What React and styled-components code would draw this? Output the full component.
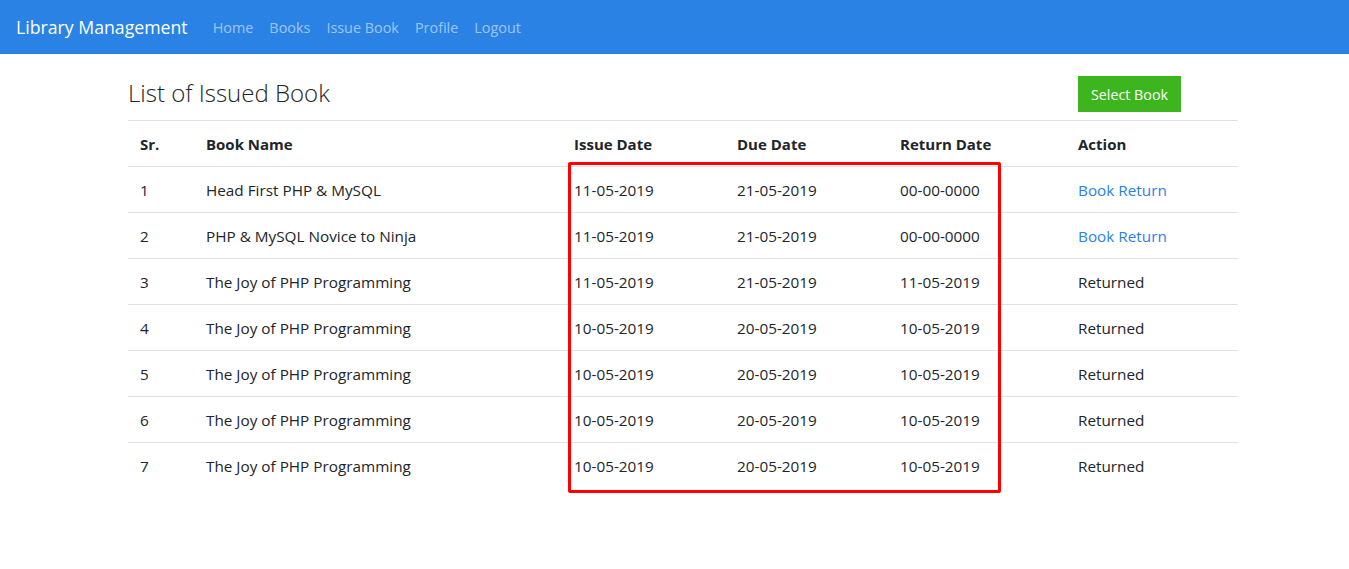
import React from "react";
import styled, { createGlobalStyle } from "styled-components";

const GlobalStyle = createGlobalStyle`
  html, body {
    min-height: 100%;
  }
  body {
    margin: 0;
    font-family: "Segoe UI", "Open Sans", "Liberation Sans", sans-serif;
    font-size: 15.3px;
    color: #212529;
    background: #fff;
  }
`;

const Navbar = styled.nav`
  display: flex;
  align-items: center;
  height: 54px;
  padding: 0 16px;
  background: #2a82e4;
`;

const Brand = styled.a`
  color: #fff;
  font-size: 17.7px;
  margin-right: 17px;
  text-decoration: none;
`;

const NavLink = styled.a`
  color: rgba(255, 255, 255, 0.55);
  font-size: 14.4px;
  padding: 0 8px;
  text-decoration: none;
`;

const Container = styled.main`
  position: relative;
  width: 1110px;
  margin-left: 128px;
  padding: 22px 0 60px;
`;

const Header = styled.div`
  display: flex;
  align-items: center;
  justify-content: space-between;
  height: 36px;
  margin-bottom: 8px;
`;

const Title = styled.h3`
  margin: 0 0 4px;
  font-size: 24px;
  font-weight: 300;
  color: #212529;
`;

const Button = styled.button`
  background: #3db51e;
  color: #fff;
  border: none;
  font-family: inherit;
  font-size: 14.3px;
  height: 36px;
  width: 103px;
  margin-right: 57px;
  padding: 0;
`;

const Table = styled.table`
  width: 1110px;
  table-layout: fixed;
  border-collapse: collapse;
`;

const Th = styled.th`
  box-sizing: border-box;
  text-align: left;
  font-weight: 700;
  font-size: 15px;
  padding: 0 12px;
  height: 46px;
  border-top: 1px solid #dee2e6;
  border-bottom: 1px solid #dee2e6;
  width: ${p => p.$w}px;
`;

const Td = styled.td`
  padding: 0 12px;
  height: 45px;
  border-top: 1px solid #dee2e6;
`;

const ActionLink = styled.a`
  color: #2a82e4;
  text-decoration: none;
`;

const Highlight = styled.div`
  position: absolute;
  box-sizing: border-box;
  left: 440px;
  top: 108px;
  width: 433px;
  height: 331px;
  border: 3px solid #f00;
  border-radius: 2px;
  pointer-events: none;
`;

const rows = [
  ["Head First PHP & MySQL", "11-05-2019", "21-05-2019", "00-00-0000", false],
  ["PHP & MySQL Novice to Ninja", "11-05-2019", "21-05-2019", "00-00-0000", false],
  ["The Joy of PHP Programming", "11-05-2019", "21-05-2019", "11-05-2019", true],
  ["The Joy of PHP Programming", "10-05-2019", "20-05-2019", "10-05-2019", true],
  ["The Joy of PHP Programming", "10-05-2019", "20-05-2019", "10-05-2019", true],
  ["The Joy of PHP Programming", "10-05-2019", "20-05-2019", "10-05-2019", true],
  ["The Joy of PHP Programming", "10-05-2019", "20-05-2019", "10-05-2019", true],
];

export default function App() {
  return (
    <>
      <GlobalStyle />
      <Navbar>
        <Brand href="#">Library Management</Brand>
        <NavLink href="#">Home</NavLink>
        <NavLink href="#">Books</NavLink>
        <NavLink href="#">Issue Book</NavLink>
        <NavLink href="#">Profile</NavLink>
        <NavLink href="#">Logout</NavLink>
      </Navbar>
      <Container>
        <Header>
          <Title>List of Issued Book</Title>
          <Button>Select Book</Button>
        </Header>
        <Table>
          <thead>
            <tr>
              <Th $w={66}>Sr.</Th>
              <Th $w={368}>Book Name</Th>
              <Th $w={163}>Issue Date</Th>
              <Th $w={163}>Due Date</Th>
              <Th $w={178}>Return Date</Th>
              <Th $w={172}>Action</Th>
            </tr>
          </thead>
          <tbody>
            {rows.map((r, i) => (
              <tr key={i}>
                <Td>{i + 1}</Td>
                <Td>{r[0]}</Td>
                <Td>{r[1]}</Td>
                <Td>{r[2]}</Td>
                <Td>{r[3]}</Td>
                <Td>{r[4] ? "Returned" : <ActionLink href="#">Book Return</ActionLink>}</Td>
              </tr>
            ))}
          </tbody>
        </Table>
        <Highlight />
      </Container>
    </>
  );
}
